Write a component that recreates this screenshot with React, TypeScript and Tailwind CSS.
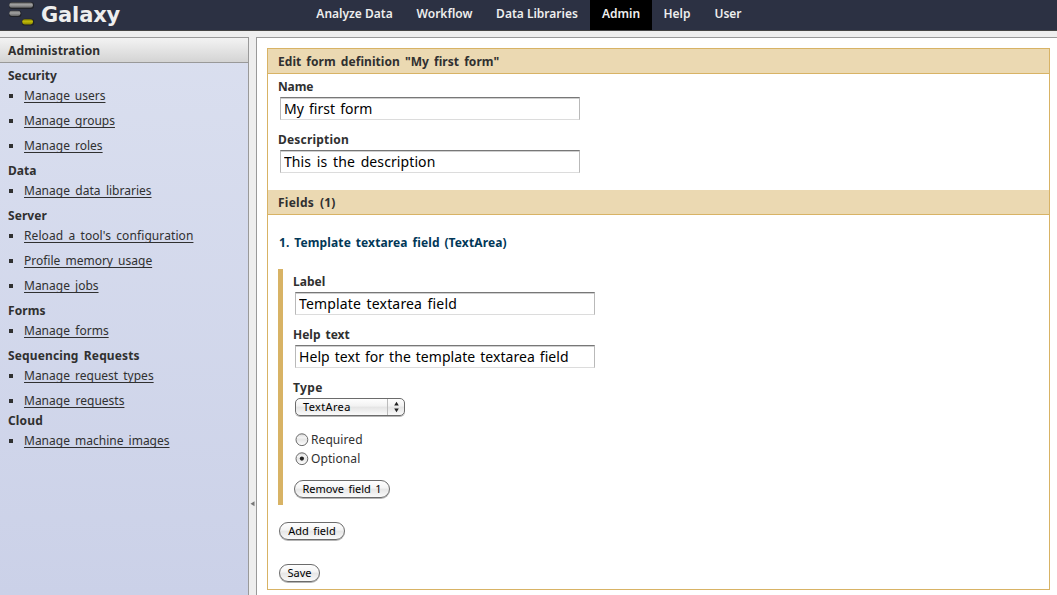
type Item = { label: string; cls: string };
type Section = { title: string; cls: string; items: Item[]; tight?: boolean };

const sections: Section[] = [
  {
    title: 'Security',
    cls: '',
    items: [
      { label: 'Manage users', cls: '[word-spacing:1.8px]' },
      { label: 'Manage groups', cls: '[word-spacing:2px]' },
      { label: 'Manage roles', cls: '[word-spacing:2px]' },
    ],
  },
  { title: 'Data', cls: '', items: [{ label: 'Manage data libraries', cls: '[word-spacing:2.3px]' }] },
  {
    title: 'Server',
    cls: 'tracking-[0.05px]',
    items: [
      { label: "Reload a tool's configuration", cls: '[word-spacing:2px] tracking-[0.09px]' },
      { label: 'Profile memory usage', cls: '[word-spacing:2px]' },
      { label: 'Manage jobs', cls: '[word-spacing:2px]' },
    ],
  },
  { title: 'Forms', cls: 'tracking-[0.1px]', items: [{ label: 'Manage forms', cls: '[word-spacing:2.3px]' }] },
  {
    title: 'Sequencing Requests',
    cls: '[word-spacing:2px] tracking-[0.13px]',
    tight: true,
    items: [
      { label: 'Manage request types', cls: '[word-spacing:2px]' },
      { label: 'Manage requests', cls: '[word-spacing:2.5px]' },
    ],
  },
  { title: 'Cloud', cls: 'tracking-[0.15px]', items: [{ label: 'Manage machine images', cls: '[word-spacing:2px]' }] },
];

function Logo() {
  return (
    <svg width="26" height="26" viewBox="0 0 26 26" className="shrink-0">
      <defs>
        <linearGradient id="bar" x1="0" y1="0" x2="0" y2="1">
          <stop offset="0" stopColor="#666" />
          <stop offset="0.4" stopColor="#a4a4a4" />
          <stop offset="1" stopColor="#606060" />
        </linearGradient>
        <linearGradient id="gold" x1="0" y1="0" x2="0" y2="1">
          <stop offset="0" stopColor="#8a8600" />
          <stop offset="0.45" stopColor="#bfba08" />
          <stop offset="1" stopColor="#8a8600" />
        </linearGradient>
      </defs>
      <rect x="0" y="2" width="25" height="6.9" rx="3.2" fill="#1f2127" />
      <rect x="0" y="10.5" width="12.4" height="6.6" rx="3.2" fill="#1f2127" />
      <rect x="12.8" y="18.8" width="12.4" height="6.8" rx="3.2" fill="#1f2127" />
      <rect x="0.3" y="2.6" width="23.6" height="5.2" rx="2.4" fill="url(#bar)" />
      <rect x="0.3" y="10.8" width="11.2" height="5.2" rx="2.4" fill="url(#bar)" />
      <rect x="13.2" y="19.2" width="10.8" height="5.2" rx="2.4" fill="url(#gold)" />
    </svg>
  );
}

function Field({ label, value, labelCls = '', cls = '' }: { label: string; value: string; labelCls?: string; cls?: string }) {
  return (
    <div className="h-[53px]">
      <div className="flex h-5 items-center font-bold">
        <span className={labelCls}>{label}</span>
      </div>
      <input
        readOnly
        defaultValue={value}
        className={`ml-0.5 block h-[23px] w-[300px] border border-x-[#b9b9b9] border-t-[#777] border-b-[#dcdcdc] bg-white px-[3px] text-[14px] text-black shadow-[inset_0_1px_0_#cfcfcf] outline-none ${cls}`}
      />
    </div>
  );
}

function Pill({ label, cls }: { label: string; cls: string }) {
  return (
    <button
      className={`flex h-[18px] items-center justify-center rounded-full border border-[#6b6b6b] bg-[linear-gradient(#fefefe,#f4f4f4_45%,#e6e6e6_50%,#fafafa)] text-[11px] whitespace-nowrap text-black shadow-[0_1px_0_#b5b5b5] ${cls}`}
    >
      <span>{label}</span>
    </button>
  );
}

function Radio({ label, checked = false }: { label: string; checked?: boolean }) {
  return (
    <div className="flex h-[19px] items-center">
      <svg width="14" height="14" viewBox="0 0 14 14" className="mr-0.5 ml-0.5 shrink-0">
        <defs>
          <linearGradient id="knob" x1="0" y1="0" x2="0" y2="1">
            <stop offset="0" stopColor="#d8d8d8" />
            <stop offset="0.3" stopColor="#f3f3f3" />
            <stop offset="0.5" stopColor="#e6e6e6" />
            <stop offset="1" stopColor="#fff" />
          </linearGradient>
        </defs>
        <circle cx="6.9" cy="6.7" r="5.9" fill="url(#knob)" stroke="#6a6a6a" strokeWidth="1" />
        {checked && <circle cx="6.9" cy="6.6" r="2.1" fill="#222" />}
      </svg>
      <span className="tracking-[0.08px]">{label}</span>
    </div>
  );
}

const nav = [
  { label: 'Analyze Data', cls: 'w-[101px]' },
  { label: 'Workflow', cls: 'w-[79px]' },
  { label: 'Data Libraries', cls: 'w-[106px]' },
  { label: 'Admin', cls: 'w-[62px] bg-black' },
  { label: 'Help', cls: 'w-[50px]' },
  { label: 'User', cls: 'w-[52px]' },
];

export default function App() {
  return (
    <div className="flex h-[595px] w-[1057px] flex-col overflow-hidden bg-[#eee] font-['Noto_Sans',sans-serif] text-[12px] text-[#303030]">
      <header className="flex h-[31px] shrink-0 border-b border-[#444] bg-[#2c3143] text-[#eee]">
        <div className="flex w-[304px] items-start pl-[9px]">
          <Logo />
          <span className="ml-[6px] font-['DejaVu_Sans',sans-serif] text-[21px] leading-[30px] font-bold tracking-[-0.15px]">Galaxy</span>
        </div>
        <nav className="flex">
          {nav.map((n) => (
            <div key={n.label} className={`flex h-[30px] items-center justify-center pb-[3px] font-semibold whitespace-nowrap ${n.cls}`}>
              <span>{n.label}</span>
            </div>
          ))}
        </nav>
      </header>

      <div className="mt-[6px] flex min-h-0 flex-1">
        <aside className="w-[249px] shrink-0 border-t border-r border-[#999] bg-[linear-gradient(#dadfef,#cbd1e8)]">
          <div className="flex h-[25px] items-center border-b border-[#999] bg-[linear-gradient(#f3f3f3,#d4d4d4)] pt-px pl-2 font-bold">
            <span className="tracking-[0.15px]">Administration</span>
          </div>
          <div className="pt-[3px] pl-2">
            {sections.map((s) => (
              <div key={s.title}>
                <div className="flex h-5 items-center font-bold">
                  <span className={s.cls}>{s.title}</span>
                </div>
                <ul className={s.tight ? 'flex flex-col gap-[5px]' : 'flex flex-col gap-[5px] pb-[5px]'}>
                  {s.items.map((i) => (
                    <li key={i.label} className="flex h-5 items-center">
                      <span className="mr-[11px] ml-px size-1 bg-[#303030]" />
                      <a className={`underline decoration-1 underline-offset-2 [text-decoration-skip-ink:none] ${i.cls}`}>{i.label}</a>
                    </li>
                  ))}
                </ul>
              </div>
            ))}
          </div>
        </aside>

        <div className="flex w-[7px] shrink-0 bg-[#eee]">
          <svg width="7" height="8" viewBox="0 0 7 8" className="mt-[463px]">
            <path d="M5.5 1.2 L1.5 3.7 L5.5 6.2 Z" fill="#777" />
          </svg>
        </div>

        <main className="flex-1 border-t border-l border-[#999] bg-white pt-[10px] pl-[10px]">
          <div className="h-[542px] w-[783px] border border-[#d8b365]">
            <div className="flex h-[25px] items-center border-b border-[#d8b365] bg-[#ebd9b2] pt-px pl-[10px] font-bold">
              <span className="tracking-[0.05px] [word-spacing:1.9px]">Edit form definition "My first form"</span>
            </div>
            <div className="h-[116px] pt-[3px] pl-[10px]">
              <Field label="Name" value="My first form" labelCls="tracking-[-0.15px]" cls="[word-spacing:1.6px]" />
              <Field label="Description" value="This is the description" labelCls="tracking-[0.2px]" cls="[word-spacing:2px] tracking-[0.09px]" />
            </div>
            <div className="flex h-[25px] items-center border-b border-[#d8b365] bg-[#ebd9b2] pt-px pl-[10px] font-bold">
              <span className="tracking-[0.25px] [word-spacing:2.5px]">Fields (1)</span>
            </div>
            <div className="pt-[18px] pl-[10px]">
              <h4 className="flex h-5 items-center pl-px font-bold text-[#023858]">
                <span className="tracking-[0.13px] [word-spacing:1.5px]">1. Template textarea field (TextArea)</span>
              </h4>
              <div className="mt-4 h-[236px] border-l-[5px] border-[#d8b365] pt-[3px] pl-[10px]">
                <Field label="Label" value="Template textarea field" cls="[word-spacing:1.7px] tracking-[0.16px]" />
                <Field label="Help text" value="Help text for the template textarea field" labelCls="[word-spacing:1.8px]" cls="[word-spacing:1.2px] tracking-[0.06px]" />
                <div className="flex h-5 items-center font-bold">
                  <span className="tracking-[0.4px]">Type</span>
                </div>
                <div className="ml-0.5 flex h-[18px] w-[110px] items-center rounded-[5px] border border-[#6b6b6b] bg-[linear-gradient(#fefefe,#f2f2f2_45%,#e4e4e4_50%,#fafafa)] pl-[7px] text-[11px] text-black shadow-[0_1px_0_#b5b5b5]">
                  <span className="tracking-[0.35px]">TextArea</span>
                  <span className="ml-auto flex h-full w-[17px] items-center justify-center border-l border-[#bbb]">
                    <svg width="7" height="12" viewBox="0 0 7 12">
                      <path d="M3.5 0.8 L5.8 4.6 H1.2 Z M3.5 11.2 L5.8 7.4 H1.2 Z" fill="#222" />
                    </svg>
                  </span>
                </div>
                <div className="mt-[14px]">
                  <Radio label="Required" />
                  <Radio label="Optional" checked />
                </div>
                <Pill label="Remove field 1" cls="mt-3 ml-px w-[96px] [word-spacing:1.5px]" />
              </div>
              <Pill label="Add field" cls="mt-[17px] ml-px w-[66px] [word-spacing:1.5px]" />
              <Pill label="Save" cls="mt-6 ml-px w-[41px]" />
            </div>
          </div>
        </main>
      </div>
    </div>
  );
}
